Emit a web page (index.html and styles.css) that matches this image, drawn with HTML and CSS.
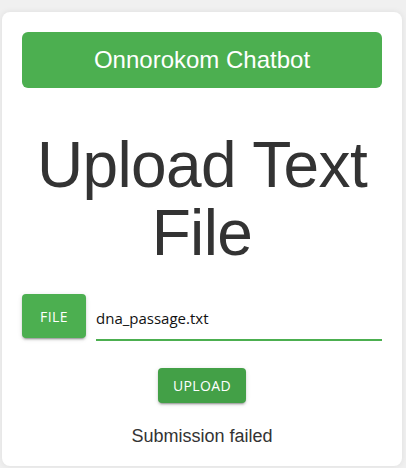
FILE: index.html
```html
<!DOCTYPE html>
<html lang="en">
<head>
<meta charset="utf-8">
<title>Onnorokom Chatbot</title>
<link rel="stylesheet" href="styles.css">
</head>
<body>
  <main class="card">
    <div class="header">Onnorokom Chatbot</div>
    <h1 class="title">Upload Text File</h1>
    <div class="file-row">
      <button class="btn btn-file">FILE</button>
      <div class="file-field">dna_passage.txt</div>
    </div>
    <div class="actions">
      <button class="btn btn-upload">UPLOAD</button>
    </div>
    <p class="status">Submission failed</p>
  </main>
</body>
</html>
```

FILE: styles.css
```css
html, body {
  margin: 0;
  padding: 0;
}
body {
  background: #f0f0f0;
  font-family: "Liberation Sans", Arial, sans-serif;
  color: #333;
  padding: 12px 4px 0 2px;
  height: 468px;
  box-sizing: border-box;
  overflow: hidden;
}
.card {
  background: #fff;
  border-radius: 8px;
  box-shadow: 0 0 6px rgba(0, 0, 0, 0.08);
  padding: 20px;
  height: 454px;
  box-sizing: border-box;
  display: flex;
  flex-direction: column;
}
.header {
  background: #4caf50;
  color: #fff;
  border-radius: 6px;
  font-size: 24px;
  line-height: 28px;
  padding: 14px;
  text-align: center;
}
.title {
  font-size: 64px;
  line-height: 68px;
  font-weight: normal;
  letter-spacing: -0.6px;
  color: #333;
  text-align: center;
  margin: 42.5px 0 27.5px;
}
.file-row {
  display: flex;
  align-items: flex-start;
  gap: 10px;
}
.btn {
  border: none;
  color: #fff;
  font-family: "Open Sans", Roboto, sans-serif;
  font-size: 14px;
  font-weight: 400;
  letter-spacing: 0.4px;
  border-radius: 4px;
  padding: 0;
  box-shadow: 0 3px 1px -2px rgba(0,0,0,0.2), 0 2px 2px 0 rgba(0,0,0,0.14), 0 1px 5px 0 rgba(0,0,0,0.12);
  cursor: pointer;
}
.btn-file {
  background: #4caf50;
  height: 44px;
  width: 64px;
}
.file-field {
  flex: 1;
  font-family: "Open Sans", sans-serif;
  font-size: 15px;
  line-height: 22px;
  color: #111;
  padding: 12.5px 0 10.5px;
  border-bottom: 2px solid #4caf50;
}
.actions {
  display: flex;
  justify-content: center;
  margin-top: 27px;
}
.btn-upload {
  background: #43a047;
  height: 35px;
  width: 88px;
}
.status {
  margin: 23px 0 0;
  text-align: center;
  font-size: 18px;
  color: #333;
}
```
